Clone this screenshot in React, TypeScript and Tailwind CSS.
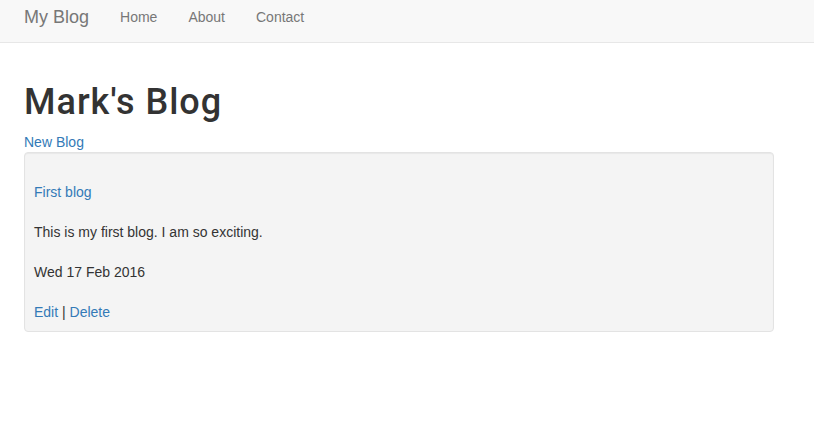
export default function App() {
  const navLinks = ['Home', 'About', 'Contact'];

  return (
    <div className="min-h-screen bg-white text-[#333] text-[14px] leading-5" style={{ fontFamily: '"Liberation Sans", Arial, sans-serif' }}>
      {/* Navbar */}
      <nav className="h-[43px] bg-[#f8f8f8] border-b border-[#e7e7e7] flex items-center pl-6">
        <a href="#" className="text-[18px] leading-5 text-[#777] mr-[31px] -mt-[8px]">My Blog</a>
        <ul className="flex gap-[31px] -mt-[8px]">
          {navLinks.map((name) => (
            <li key={name}>
              <a href="#" className="text-[#777]">{name}</a>
            </li>
          ))}
        </ul>
      </nav>

      {/* Page content */}
      <main className="px-6">
        <h1 className="mt-[39px] mb-[10px] text-[36px] leading-10 font-medium tracking-[1px] font-[Roboto,sans-serif]">Mark's Blog</h1>
        <a href="#" className="block text-[#337ab7]">New Blog</a>

        <div className="w-[750px] bg-[#f4f4f4] border border-[#e3e3e3] rounded shadow-[inset_0_1px_1px_rgba(0,0,0,0.05)] px-[9px] pt-[29px] pb-[9px] flex flex-col gap-5">
          <a href="#" className="text-[#337ab7]">First blog</a>
          <p>This is my first blog. I am so exciting.</p>
          <p>Wed 17 Feb 2016</p>
          <p>
            <a href="#" className="text-[#337ab7]">Edit</a> | <a href="#" className="text-[#337ab7]">Delete</a>
          </p>
        </div>
      </main>
    </div>
  );
}
